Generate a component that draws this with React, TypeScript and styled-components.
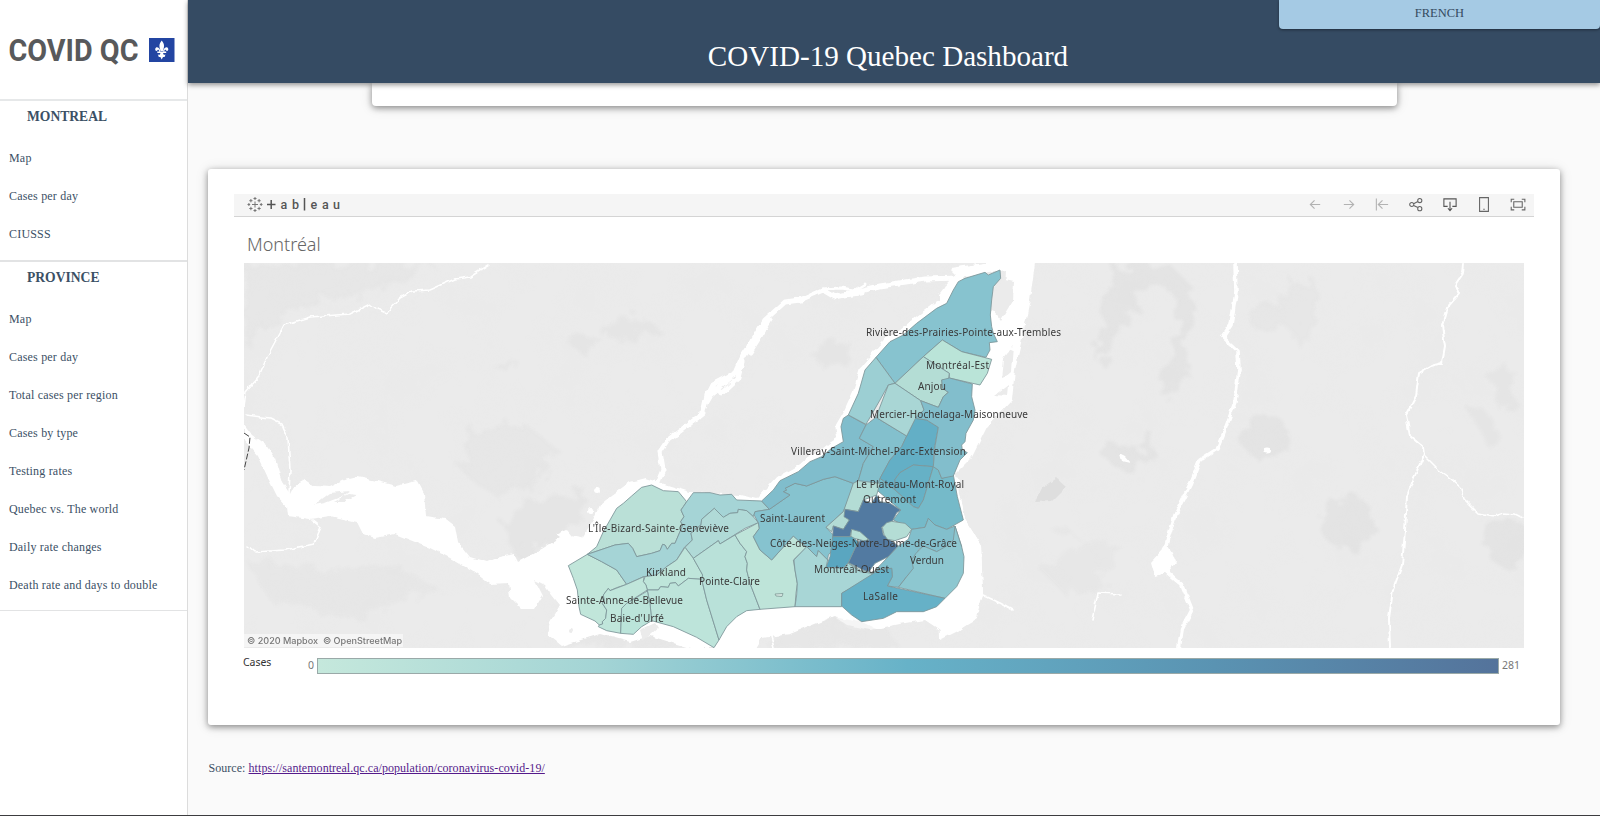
import React from "react";
import styled, { createGlobalStyle } from "styled-components";

const GlobalStyle = createGlobalStyle`
  * { box-sizing: border-box; }
  body {
    margin: 0;
    background: #fafafa;
    color: #3b5065;
    font-family: "Liberation Serif", "Times New Roman", serif;
    overflow: hidden;
  }
`;

const Page = styled.div`
  display: flex;
  height: 816px;
  border-bottom: 1px solid #3c3c3f;
`;

const Sidebar = styled.nav`
  flex: 0 0 188px;
  background: #fff;
  border-right: 1px solid #dcdcdc;
`;

const LogoBox = styled.div`
  display: flex;
  align-items: center;
  height: 101px;
  padding-left: 8px;
  border-bottom: 2px solid #e6e8e9;
`;

const Section = styled.section<{ $last?: boolean }>`
  padding-bottom: ${(p) => (p.$last ? 6 : 7)}px;
  border-bottom: ${(p) => (p.$last ? 1 : 2)}px solid #e2e3e4;
`;

const SectionTitle = styled.h2`
  margin: 0;
  padding: 7px 0 0 27px;
  height: 38px;
  font-size: 13.6px;
  line-height: 17px;
  font-weight: 700;
`;

const NavItem = styled.a`
  display: flex;
  align-items: center;
  height: 38px;
  padding-left: 9px;
  font-size: 12px;
  letter-spacing: 0.19px;
`;

const Main = styled.main`
  flex: 1;
  display: flex;
  flex-direction: column;
  min-width: 0;
`;

const Header = styled.header`
  position: relative;
  z-index: 2;
  flex: 0 0 82.500px;
  display: flex;
  flex-direction: column;
  background: #354b63;
  box-shadow: 0 2px 5px rgba(0, 0, 0, 0.42);
`;

const Language = styled.button`
  align-self: flex-end;
  width: 321px;
  height: 29px;
  padding: 0 0 3px;
  border: 0;
  border-radius: 0 0 4px 4px;
  background: #a5cae4;
  color: #34495e;
  font: 12.5px "Liberation Serif", serif;
  box-shadow: 0 1px 3px rgba(0, 0, 0, 0.4);
`;

const Title = styled.h1`
  margin: 7px 12px 0 0;
  text-align: center;
  color: #fff;
  font-size: 29.1px;
  line-height: 40px;
  font-weight: 400;
`;

const cardShadow = "0 2px 6px rgba(0,0,0,.4), 0 1px 14px rgba(0,0,0,.12)";

const PreviousCard = styled.div`
  flex: 0 0 23.500px;
  width: 1025px;
  margin-left: 184px;
  background: #fff;
  border-radius: 0 0 4px 4px;
  box-shadow: ${cardShadow};
`;

const Card = styled.section`
  width: 1351.500px;
  height: 556px;
  margin: 63px 0 0 20px;
  padding: 25px 25.500px 0 26px;
  background: #fff;
  border-radius: 3px;
  box-shadow: ${cardShadow};
`;

const Toolbar = styled.div`
  display: flex;
  align-items: center;
  justify-content: space-between;
  height: 23px;
  padding: 0 8px 2px 13px;
  background: #f5f5f5;
  border-bottom: 1px solid #d4d4d4;
`;

const ToolbarActions = styled.div`
  display: flex;
  gap: 17.9px;
`;

const VizTitle = styled.h3`
  margin: 0;
  height: 46px;
  padding: 15px 0 0 13px;
  color: #666;
  font: 300 18px/24px "Noto Sans", "Open Sans", sans-serif;
`;

const MapFrame = styled.div`
  position: relative;
  width: 1280px;
  height: 385px;
  margin-left: 10px;
  overflow: hidden;
  svg { display: block; }
`;

const Attribution = styled.div`
  position: absolute;
  left: 0;
  bottom: 1px;
  width: 159px;
  height: 13px;
  padding-left: 3px;
  background: rgba(247, 247, 247, 0.85);
  color: #777;
  font: 500 9.08px/13px Inter, sans-serif;
  white-space: nowrap;
`;

const Legend = styled.div`
  display: flex;
  margin: 10px 0 0 9px;
  color: #333;
  font: 10.5px/11px "Noto Sans", sans-serif;
`;

const LegendLabel = styled.span`
  width: 65px;
  margin-top: -1px;
  letter-spacing: -0.05px;
`;

const LegendValue = styled.span<{ $end?: boolean }>`
  width: ${(p) => (p.$end ? 28 : 9)}px;
  padding: 2px 0 0 ${(p) => (p.$end ? 3 : 0)}px;
  color: #777;
`;

const Ramp = styled.div`
  width: 1182px;
  height: 16px;
  border: 1px solid #9aa9a8;
  background: linear-gradient(90deg, #c5e8dc 0%, #a3d4d5 24%, #67b2c8 50%, #5a93b2 76%, #54739b 100%);
`;

const Source = styled.p`
  margin: 35px 0 0 20.500px;
  font-size: 12px;
  letter-spacing: 0.05px;
  line-height: 16px;
  a { color: #551a8b; text-decoration: underline; }
`;

const Logo = () => (
  <svg width="170" height="48" viewBox="0 -8 170 48">
    <text x="0.500" y="27.300" textLength="130" lengthAdjust="spacingAndGlyphs" fontFamily="Roboto, sans-serif" fontSize="32" fontWeight="700" fill="#58595b">COVID QC</text>
    <rect x="141" y="4" width="25.5" height="24" fill="#2345a2" />
    <g fill="#fff">
      <path d="M153.700 6.500C150.500 10.500 151.200 13 152.600 17H154.800C156.300 13 156.900 10.500 153.700 6.500Z" />
      <path d="M152.500 17C151.600 13.500 148 11.500 147.200 15C147 17 149 17.800 149.600 16C151 15 151.300 16.800 151.200 18.500Z" />
      <path d="M155 17C155.900 13.500 159.500 11.500 160.300 15C160.500 17 158.500 17.800 157.900 16C156.500 15 156.200 16.800 156.300 18.500Z" />
      <path d="M149.300 17.500H158.200V18.900H155.100C155.200 20.500 156.500 21.500 157.600 20.300L156.600 23H155L153.700 25.500L152.400 23H150.800L149.800 20.300C151 21.500 152.300 20.500 152.400 18.900H149.300Z" />
    </g>
  </svg>
);

const TableauLogo = () => (
  <svg width="100" height="20" viewBox="0 0 100 20">
    <g stroke="#777" strokeWidth="1" fill="none">
      <path d="M5 10.500H11M8 7.500V13.500M6.500 4.500H9.500M8 3V6M6.500 16.500H9.500M8 15V18M.5 10.500H3.200M12.800 10.500H15.500M1.900 9V12M14.200 9V12M2.300 6.700H5.500M3.900 5V8.300M10.500 6.700H13.700M12.100 5V8.300M2.300 14.500H5.500M3.900 12.800V16.200M10.500 14.500H13.700M12.100 12.800V16.200" />
    </g>
    <path d="M20 10.500H28.500M24.200 6V15M57.500 4V16.500" stroke="#555" strokeWidth="1.5" />
    <g fontFamily="Roboto, sans-serif" fontWeight="500" fontSize="12.500" fill="#555">
      <text x="33.500" y="15">a</text>
      <text x="45" y="15">b</text>
      <text x="63.500" y="15">e</text>
      <text x="75" y="15">a</text>
      <text x="86" y="15">u</text>
    </g>
  </svg>
);

const toolIcons = [
  { color: "#b2b2b2", d: "M3.500 8.500H14M8 4L3.500 8.500L8 13" },
  { color: "#b2b2b2", d: "M3 8.500H13.500M9 4L13.500 8.500L9 13" },
  { color: "#b2b2b2", d: "M2.500 2V15M4.500 8.500H15M9 4L4.500 8.500L9 13" },
  { color: "#666", d: "M6 7.700L10.500 5.300M6 9.500L10.500 11.800M6.200 8.500A2.200 2.200 0 1 1 1.800 8.500A2.200 2.200 0 1 1 6.200 8.500M14.700 4.300A2.200 2.200 0 1 1 10.300 4.300A2.200 2.200 0 1 1 14.700 4.300M14.700 12.900A2.200 2.200 0 1 1 10.300 12.900A2.200 2.200 0 1 1 14.700 12.900" },
  { color: "#555", d: "M6 10.500H2V2.500H15V10.500H11M8.500 5.500V15M6.300 12.500L8.500 15L10.700 12.500" },
  { color: "#666", d: "M3.800 1.200H13.200V15.800H3.800ZM7.700 13.500H9.300" },
  { color: "#666", d: "M4 5.500H13V11.500H4ZM1.300 6V3H4.500M12.500 3H15.800V6M15.800 11V14.200H12.500M4.500 14.200H1.300V11" },
];

const ToolIcon = ({ color, d }: { color: string; d: string }) => (
  <svg width="16" height="17" viewBox="0 0 17 17" fill="none" stroke={color} strokeWidth="1.150">
    <path d={d} />
  </svg>
);

type Area = [fill: string, points: string];

/* Boroughs are drawn at three units per pixel, in blocks anchored on the west, north and south of the island. */
const west: Area[] = [
  ["#c1e6da", "25,317 82,283 125,305 170,330 200,373 170,383 150,392 145,385 130,405 133,420 127,430 140,450 137,475 127,485 128,492 118,495 105,483 62,463 57,440 52,390 40,355"],
  ["#bae0d7", "82,283 110,260 130,215 170,145 190,130 215,108 245,82 275,75 310,92 355,95 380,125 370,140 363,150 372,170 362,185 368,195 360,215 345,250 335,250 322,268 315,255 308,253 300,272 275,280 230,290 218,265 205,250 165,255"],
  ["#a5d4d6", "82,283 165,255 205,250 218,265 230,290 275,280 300,272 308,253 315,255 322,268 335,250 345,250 360,215 368,195 362,185 372,170 363,150 370,140 380,125 400,98 450,98 480,105 515,103 530,120 605,123 628,148 585,155 580,170 560,152 535,148 533,158 510,160 490,172 463,145 425,178 423,195 400,210 393,220 397,240 373,262 350,300 320,320 290,345 250,350 200,373 170,330 125,305"],
  ["#b0dad7", "463,145 490,172 510,160 533,158 535,148 560,152 580,170 595,188 555,205 480,252 475,242 400,295 375,262 397,240 393,220 423,195 425,178"],
  ["#bee5da", "375,262 400,295 420,330 428,345 425,358 385,355 355,378 347,368 330,370 325,382 302,380 295,390 262,390 258,375 250,365 255,350 290,345 320,320 350,300"],
  ["#bde4da", "262,390 295,390 302,380 325,382 330,370 347,368 355,378 385,355 425,358 440,420 477,540 462,563 410,532 340,500 275,482 270,430"],
  ["#c0e6db", "118,495 128,492 127,485 137,475 140,450 127,430 133,420 130,405 145,385 150,392 200,373 252,350 250,365 258,375 262,390 200,430 185,445 182,520 140,512 115,500"],
  ["#bbe4da", "185,445 200,430 262,393 270,430 275,482 245,500 220,523 182,520"],
  ["#b9e1d9", "400,295 475,242 480,252 525,225 540,250 560,275 555,290 562,310 560,330 570,370 600,448 560,452 530,470 500,500 477,540 440,420 425,358 428,345"],
  ["#bee4d9", "525,225 595,188 598,205 580,230 600,270 635,300 700,228 715,240 740,262 700,300 705,330 712,372 708,400 705,440 600,448 570,370 560,330 562,310 555,290 560,275 540,250"],
];

const south: Area[] = [
  ["#86c3cf", "-65,248 -78,225 -75,215 -32,208 30,165 10,155 20,150 15,145 45,130 80,138 130,118 165,110 220,130 205,180 190,215 138,262 160,285 158,330 145,345 143,360 115,332 110,350 80,320 55,302 40,288 -25,360 -60,330 -80,290 -62,265"],
  ["#80bdcc", "-55,183 -20,150 0,122 55,95 90,65 125,50 155,25 190,5 183,-40 190,-65 205,-75 258,-45 238,-5 280,20 250,70 235,122 220,130 165,110 130,118 80,138 45,130 15,145 20,150 10,155 30,165 -32,208"],
  ["#83c0cd", "258,-45 288,-68 380,-12 365,20 330,60 300,115 290,150 235,122 250,70 280,20 238,-5"],
  ["#63afc6", "405,-65 440,-60 475,-38 462,30 460,80 400,75 360,98 345,118 345,150 300,115 330,60 365,20 380,-12"],
  ["#66b1c6", "345,118 360,98 400,75 460,80 430,180 415,205 400,200 345,150"],
  ["#75bac9", "460,80 475,90 485,115 520,105 532,170 550,240 500,268 465,255 445,235 435,262 395,268 340,240 362,210 290,150 300,115 345,150 400,200 415,205 430,180"],
  ["#b3dcd5", "235,122 300,130 290,165 250,180 235,215 195,208 208,240 190,268 160,258 155,275 138,262 190,215 220,130"],
  ["#527aa1", "250,180 275,190 290,165 300,185 330,190 362,210 350,218 338,242 305,262 310,285 355,318 325,350 285,370 265,397 205,368 225,325 240,302 215,268 210,290 158,290 160,258 190,268 208,240 192,230 195,208 235,215"],
  ["#b4ddd5", "307,262 320,248 335,244 375,250 395,268 380,290 345,302 322,298 312,283"],
  ["#b7dfd7", "215,268 240,275 268,300 250,302 212,292"],
  ["#5aa6c0", "158,290 215,290 235,305 225,325 205,368 190,385 138,382 150,350"],
  ["#b7dfd7", "205,368 240,390 275,397 292,392 250,412 200,390"],
  ["#a8d6d6", "80,320 110,350 115,332 143,360 138,382 190,385 205,370 240,395 290,402 185,460 185,500 45,500 50,465 52,430 45,390 42,360"],
  ["#82bfcc", "275,402 325,350 355,318 385,298 395,268 435,262 445,235 465,255 500,268 525,258 545,320 500,325 470,335 430,318 415,330 410,380 380,410 355,442 322,438 337,410 335,385 300,388"],
  ["#8dc7d0", "525,258 545,320 552,350 550,400 530,440 495,475 355,442 380,410 400,385 395,360 408,340 430,318 470,335 500,318 520,300"],
  ["#66b1c7", "185,460 300,388 335,385 337,410 322,438 495,475 470,500 430,515 350,515 310,535 245,545 215,525 185,498"],
];

const north: Area[] = [
  ["#87c3cf", "660,30 662,55 640,80 635,120 631,165 635,200 640,220 652,245 628,248 630,270 618,292 545,275 487,240 430,290 345,370 288,292 330,245 370,225 410,190 470,145 500,130 520,90 535,65 555,55 615,37 625,45"],
  ["#9ccfd3", "288,292 345,370 325,375 300,420 258,493 205,465 235,400 255,330"],
  ["#bae4d8", "487,240 545,275 635,298 622,340 600,375 508,354 508,340 430,290"],
  ["#b4ddd5", "430,290 508,340 505,360 485,360 488,385 505,397 495,405 490,410 475,442 422,422 345,370"],
  ["#a9d6d5", "345,370 422,422 432,450 405,478 380,528 288,472 325,375"],
  ["#82becc", "508,354 577,372 575,410 585,450 580,480 558,520 555,545 545,555 547,570 562,578 540,600 520,648 485,655 475,630 460,620 465,560 475,502 440,480 405,475 432,450 422,422 475,442 490,410 505,397 488,385 485,360"],
];

const Areas = ({ x, y, items }: { x: number; y: number; items: Area[] }) => (
  <g transform={`translate(${x} ${y}) scale(.33333)`} stroke="#7d9599" strokeWidth="2.600" strokeLinejoin="round">
    {items.map(([fill, points], i) => (
      <polygon key={i} fill={fill} points={points} />
    ))}
  </g>
);

/* name, left edge, baseline, width */
const labels: [string, number, number, number][] = [
  ["Rivière-des-Prairies-Pointe-aux-Trembles", 866, 335.5, 195],
  ["Montréal-Est", 926, 368.5, 63],
  ["Anjou", 918, 389.5, 28],
  ["Mercier-Hochelaga-Maisonneuve", 870, 417.5, 158],
  ["Villeray-Saint-Michel-Parc-Extension", 791, 454.5, 175],
  ["Le Plateau-Mont-Royal", 856, 487.5, 108],
  ["Outremont", 863, 502.5, 53],
  ["Saint-Laurent", 760, 521.5, 65],
  ["L'Île-Bizard-Sainte-Geneviève", 588, 531.5, 141],
  ["Côte-des-Neiges-Notre-Dame-de-Grâce", 770, 546.5, 187],
  ["Verdun", 910, 563.5, 34],
  ["Montréal-Ouest", 814, 572.5, 75],
  ["Kirkland", 646, 576, 40],
  ["Pointe-Claire", 699, 584.5, 61],
  ["LaSalle", 863, 599.5, 35],
  ["Sainte-Anne-de-Bellevue", 566, 603.5, 117],
  ["Baie-d'Urfé", 610, 622, 54],
];

const Land = () => (
  <g fill="#d9d9d9" opacity=".4" filter="url(#soft)">
    <path d="M244 263H440L400 280L330 300L280 315L244 350Z" opacity=".6" />
    <path d="M1110 265L1105 320L1095 345L1100 365L1120 330L1150 285L1170 290L1180 330L1160 380L1165 400L1185 370L1190 320L1195 290L1170 265Z" />
    <path d="M1108 440L1140 450L1150 430L1155 450L1130 475L1105 460Z" />
    <circle cx="1267" cy="438" r="23" />
    <circle cx="1347" cy="522" r="27" />
    <circle cx="1508" cy="543" r="24" />
    <path d="M1250 310L1290 295L1310 275L1320 300L1300 350L1290 330L1255 330Z" opacity=".6" />
    <path d="M1490 375L1510 365L1515 400L1500 410ZM1465 405L1485 410L1500 430L1490 450Z" opacity=".7" />
    <path d="M600 335L640 315L662 330L620 340ZM560 335L600 335L590 360ZM820 345L850 340L845 365L815 362ZM490 365L520 362L510 375Z" opacity=".7" />
    <path d="M244 560L330 570L400 565L440 590L360 620L270 600Z" opacity=".5" />
    <path d="M470 435L520 420L560 450L540 480L500 500L460 470Z" opacity=".6" />
    <path d="M530 500L590 490L580 520L550 545L515 560L500 520Z" opacity=".8" />
    <path d="M560 630L580 620L650 628L690 648H560ZM770 640L830 605L880 620L900 648H770Z" opacity=".5" />
    <path d="M1040 570L1090 540L1120 545L1100 590L1070 600ZM1050 530L1060 520L1080 540Z" opacity=".5" />
  </g>
);

const Water = () => (
  <g filter="url(#shore)">
    <g fill="#fff">
      {/* Ottawa River and Lake of Two Mountains */}
      <path d="M244 424L253 436L266 445L275 459L282 482L290 494L294 486L305 480L314 486L330 487L345 480L358 477L377 481L396 486L417 481L424 494L426 516L446 519L455 526L458 542L470 557L487 562L500 557L514 554L518 562L540 550L565 535L582 538L592 522L600 505L612 495L630 482L645 478L690 492L740 495L762 500L800 476L840 450L850 430L900 440L960 480L940 600L780 600L700 615L560 605L552 595L545 585L535 580L543 596L535 609L522 609L510 597L508 583L490 584L474 572L450 558L430 548L395 534L375 538L363 534L357 522L330 516L310 519L288 516L287 507L277 496L268 478L258 456L244 440Z" />
      {/* Lake Saint-Louis */}
      <path d="M560 605L550 622L547 634L562 646L600 634L630 642L650 636L690 648H756L762 638L790 634L815 624L835 616L848 625L870 630L900 624L925 620L940 630L956 631L972 622L983 596L981 545L964 518L955 475L960 460L930 430L860 420V600H700Z" />
      {/* Saint Lawrence */}
      <path d="M940 640L935 470L940 360L980 330L992 312L1005 292L1006 270L960 278L950 268L985 263H1035L1030 300L1023 334L1015 370L1012 400L987 427L972 457L955 474L964 518L981 545L983 594L976 618L958 631Z" />
      <path d="M1151 562L1162 550L1166 543L1172 552L1176 562L1168 572L1155 576Z" />
      <circle cx="597" cy="491" r="3" />
      <circle cx="591" cy="511" r="3" />
      <path d="M556 535L567 530L572 536L560 538Z" />
      <path d="M1119 454L1125 457L1130 463L1121 461Z" />
      <ellipse cx="1267" cy="450" rx="4" ry="2.500" />
    </g>
    <g fill="#ebebeb">
      <path d="M314 505L330 493L350 491L343 496L325 503ZM344 502L356 495L348 494L333 502Z" />
      <path d="M993 296L1005 280L1014 282L1013 300L1001 320L993 310Z" />
      <path d="M1004 358L1013 346L1011 372L1002 380ZM995 395L1008 385L1007 396Z" />
      <path d="M640 630L655 623L658 628L643 641Z" />
      <path d="M833 616L860 621L880 631L850 629Z" opacity=".5" />
      <circle cx="571" cy="631" r="2" />
    </g>
    <g fill="none" stroke="#fff" strokeLinejoin="round" strokeLinecap="round">
      <path d="M657 484L663 470L660 452L668 440L688 425L703 413L707 395L712 385L735 373L743 355L753 340L765 320L785 302L800 300L823 290L835 297L880 286L925 279L960 278" strokeWidth="5" />
      <path d="M706 402L714 388L722 393L738 378L742 362M710 395L730 378M750 352L770 320" strokeWidth="5" />
      <path d="M823 289L840 288L855 290L865 284M835 297L862 294" strokeWidth="3" />
      <path d="M762 502L780 482L798 472L810 462L822 456L832 448L843 441L841 427L848 415L858 393L865 370L876 357L890 341L903 335L917 323L937 308L947 303L950 288L958 280" strokeWidth="11" />
      <path d="M943 306L941 295L952 281" strokeWidth="4" />
      <path d="M1235 263L1236 292L1231 325L1223 337L1238 351L1239 370L1235 402L1223 435L1217 449L1200 460L1190 485L1175 515L1166 545" strokeWidth="3.600" />
      <path d="M1167 572L1182 585L1192 610L1182 629L1179 648" strokeWidth="4" />
      <path d="M1464 263L1463 273L1455 285L1459 294L1447 308L1442 325L1445 346L1442 363L1431 366L1419 373L1416 396L1406 415L1410 436L1423 447L1424 455L1415 475L1407 496L1405 530L1402 565L1393 590L1389 618L1390 648" strokeWidth="2" />
      <path d="M1424 455L1439 470L1450 478L1461 488L1464 499L1478 513L1494 516L1503 513L1515 514L1523 518" strokeWidth="1.500" />
      <path d="M244 408L246 392L258 378L268 355L284 325L310 317L350 314L370 304L377 309L386 313L400 298L413 291L430 290L455 279L470 277L489 265" strokeWidth="1.500" />
      <path d="M246 415L270 418L282 424L288 438L290 470L289 495M312 520L321 527L314 544L285 550L255 552L248 546M983 595L1000 603L1013 610M1120 594L1098 593L1092 620M770 633L774 648" strokeWidth="1.600" />
      <path d="M1022 320L1005 350L998 375M1016 350L1000 345M1000 380L1012 375" strokeWidth="3" />
    </g>
    <path d="M1035 502L1042 488L1056 478L1066 487L1052 501Z" fill="#dedede" />
  </g>
);

const MapDrawing = () => (
  <svg width="1280" height="385" viewBox="244 263 1280 385">
    <defs>
      <filter id="soft" x="-5%" y="-5%" width="110%" height="110%">
        <feTurbulence type="fractalNoise" baseFrequency=".06" numOctaves="3" seed="5" result="n" />
        <feDisplacementMap in="SourceGraphic" in2="n" scale="28" result="d" />
        <feGaussianBlur in="d" stdDeviation="1.800" />
      </filter>
      <filter id="shore" x="-2%" y="-2%" width="104%" height="104%">
        <feTurbulence type="fractalNoise" baseFrequency=".12" numOctaves="2" seed="9" />
        <feDisplacementMap in="SourceGraphic" scale="5" xChannelSelector="R" yChannelSelector="G" />
      </filter>
      <filter id="terrain" x="0" y="0" width="100%" height="100%">
        <feTurbulence type="fractalNoise" baseFrequency=".022" numOctaves="4" seed="3" />
        <feColorMatrix values="0 0 0 0 .8  0 0 0 0 .8  0 0 0 0 .8  1.400 0 0 0 -.6" />
      </filter>
    </defs>
    <rect x="244" y="263" width="1280" height="385" fill="#ebebeb" />
    <rect x="244" y="263" width="1280" height="385" filter="url(#terrain)" opacity=".45" />
    <Land />
    <Water />
    <path d="M244 433L250 437L249 448L244 470" fill="none" stroke="#444" strokeWidth="1" strokeDasharray="6 2" />
    <Areas x={560} y={460} items={west} />
    <Areas x={780} y={440} items={south} />
    <Areas x={780} y={260} items={north} />
    <path d="M775 594L783 593.500L782 596.500L776 596Z" fill="#d8e9e3" stroke="#7f9896" strokeWidth=".8" />
    <g fontFamily="'Noto Sans', sans-serif" fontSize="10" fill="#3a3a3a">
      {labels.map(([name, x, y, width]) => (
        <text key={name} x={x} y={y} textLength={width}>{name}</text>
      ))}
    </g>
  </svg>
);

const montreal = ["Map", "Cases per day", "CIUSSS"];
const province = ["Map", "Cases per day", "Total cases per region", "Cases by type", "Testing rates", "Quebec vs. The world", "Daily rate changes", "Death rate and days to double"];

export default function App() {
  return (
    <Page>
      <GlobalStyle />
      <Sidebar>
        <LogoBox><Logo /></LogoBox>
        <Section>
          <SectionTitle>MONTREAL</SectionTitle>
          {montreal.map((item) => <NavItem key={item}>{item}</NavItem>)}
        </Section>
        <Section $last>
          <SectionTitle>PROVINCE</SectionTitle>
          {province.map((item) => <NavItem key={item}>{item}</NavItem>)}
        </Section>
      </Sidebar>
      <Main>
        <Header>
          <Language>FRENCH</Language>
          <Title>COVID-19 Quebec Dashboard</Title>
        </Header>
        <PreviousCard />
        <Card>
          <Toolbar>
            <TableauLogo />
            <ToolbarActions>
              {toolIcons.map((icon, i) => <ToolIcon key={i} {...icon} />)}
            </ToolbarActions>
          </Toolbar>
          <VizTitle>Montréal</VizTitle>
          <MapFrame>
            <MapDrawing />
            <Attribution>© 2020 Mapbox &nbsp;© OpenStreetMap</Attribution>
          </MapFrame>
          <Legend>
            <LegendLabel>Cases</LegendLabel>
            <LegendValue>0</LegendValue>
            <Ramp />
            <LegendValue $end>281</LegendValue>
          </Legend>
        </Card>
        <Source>
          Source: <a>https://santemontreal.qc.ca/population/coronavirus-covid-19/</a>
        </Source>
      </Main>
    </Page>
  );
}
